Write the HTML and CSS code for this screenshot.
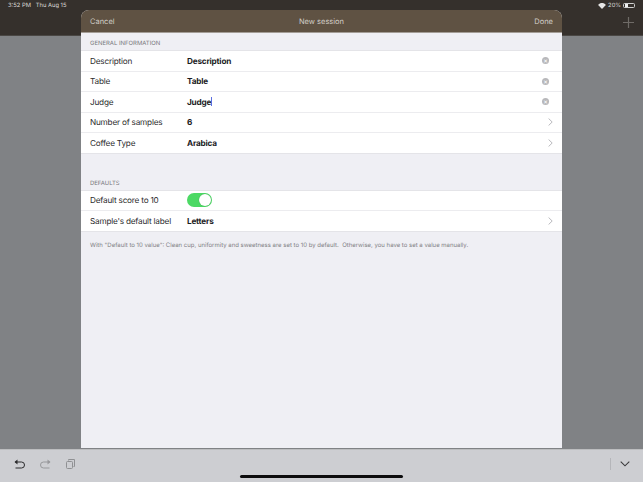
FILE: index.html
```html
<!DOCTYPE html>
<html lang="en">
<head>
<meta charset="utf-8">
<title>New session</title>
<link rel="stylesheet" href="styles.css">
</head>
<body>
<div class="app">
  <header class="topbar">
    <div class="status">
      <span>3:52 PM&nbsp;&nbsp; Thu Aug 15</span>
      <span class="status-right">
        <svg class="wifi" width="8" height="6" viewBox="0 0 9 7"><path d="M4.500 7 0 2.400C2.500-.7 6.500-.7 9 2.400Z" fill="#e6e6e6"/></svg>
        <span>20%</span>
        <span class="battery"><span class="battery-fill"></span></span>
      </span>
    </div>
    <svg class="plus" width="11" height="11" viewBox="0 0 11 11"><path d="M5.500 0v11M0 5.500h11" stroke="#6f6b67" stroke-width="1.200"/></svg>
  </header>
  <main class="backdrop"></main>
  <footer class="toolbar">
    <svg class="tool" width="11" height="10" viewBox="0 0 11 10"><path d="M1 3h6.500a3 3 0 0 1 0 6H1.500" fill="none" stroke="#2b2b2d" stroke-width="1"/><path d="M3.500 .5 .5 3l3 2.500Z" fill="#2b2b2d"/></svg>
    <svg class="tool" width="11" height="10" viewBox="0 0 11 10"><path d="M10 3H3.500a3 3 0 0 0 0 6H9.500" fill="none" stroke="#97989b" stroke-width="1"/><path d="M7.500 .5l3 2.500-3 2.500Z" fill="#97989b"/></svg>
    <svg class="tool" width="9" height="10" viewBox="0 0 9 10"><rect x="0.500" y="2.500" width="6" height="7" rx="1" fill="#cdced2" stroke="#8f9093"/><path d="M2.500 1.500V.5h6v7H7.500" fill="none" stroke="#8f9093"/></svg>
    <span class="spacer"></span>
    <span class="divider"></span>
    <svg class="chev-down" width="10" height="6" viewBox="0 0 10 6"><path d="M.7.700 5 4.800 9.300.700" fill="none" stroke="#3a3a3c" stroke-width="1.100"/></svg>
  </footer>
</div>

<section class="sheet">
  <div class="sheet-head">
    <span>Cancel</span>
    <span class="sheet-title">New session</span>
    <span>Done</span>
  </div>
  <div class="section-label first">GENERAL INFORMATION</div>
  <div class="group">
    <div class="row"><span class="label">Description</span><span class="value">Description</span><span class="clear">×</span></div>
    <div class="row"><span class="label">Table</span><span class="value">Table</span><span class="clear">×</span></div>
    <div class="row"><span class="label">Judge</span><span class="value">Judge<span class="caret"></span></span><span class="clear">×</span></div>
    <div class="row"><span class="label">Number of samples</span><span class="value">6</span><svg class="chev" width="5" height="8" viewBox="0 0 5 8"><path d="M.6.500 4.200 4 .6 7.500" fill="none" stroke="#b9b9bd" stroke-width="1"/></svg></div>
    <div class="row"><span class="label">Coffee Type</span><span class="value">Arabica</span><svg class="chev" width="5" height="8" viewBox="0 0 5 8"><path d="M.6.500 4.200 4 .6 7.500" fill="none" stroke="#b9b9bd" stroke-width="1"/></svg></div>
  </div>
  <div class="section-label second">DEFAULTS</div>
  <div class="group">
    <div class="row"><span class="label">Default score to 10</span><span class="toggle"><span class="knob"></span></span></div>
    <div class="row"><span class="label">Sample's default label</span><span class="value">Letters</span><svg class="chev" width="5" height="8" viewBox="0 0 5 8"><path d="M.6.500 4.200 4 .6 7.500" fill="none" stroke="#b9b9bd" stroke-width="1"/></svg></div>
  </div>
  <p class="note">With "Default to 10 value": Clean cup, uniformity and sweetness are set to 10 by default.&nbsp; Otherwise, you have to set a value manually.</p>
</section>
<div class="home-indicator"></div>
</body>
</html>
```
FILE: styles.css
```css
* { box-sizing: border-box; }
html, body { margin: 0; padding: 0; height: 100%; overflow: hidden; }
body { font-family: Inter, "Liberation Sans", Arial, sans-serif; background: #808285; text-rendering: geometricPrecision; }

.app { width: 643px; height: 482px; display: flex; flex-direction: column; }

.topbar { height: 36px; background: #35302c; border-bottom: 1px solid #4a4744; display: flex; flex-direction: column; padding: 0 8px; position: relative; }
.status { display: flex; justify-content: space-between; align-items: center; height: 11px; font-size: 5.800px; color: #dedddb; }
.status-right { display: flex; align-items: center; gap: 2px; padding-right: 0; }
.battery { width: 12px; height: 5.500px; border: 0.500px solid #d0d0d0; border-radius: 1.500px; display: block; padding: 0.500px; }
.battery-fill { display: block; width: 3px; height: 100%; background: #f0f0f0; }
.plus { position: absolute; right: 9px; top: 17px; }

.backdrop { flex: 1; background: #808285; }

.toolbar { height: 33px; background: #cdced2; border-top: 1px solid #bcbdbf; display: flex; align-items: center; padding: 0 13px 5px 14px; }
.tool { margin-right: 15px; }
.spacer { flex: 1; }
.divider { width: 1px; height: 12px; background: #b5b6ba; margin-right: 9px; }
.chev-down { margin-right: 0; }

.sheet { position: absolute; left: 81px; top: 10px; width: 481px; height: 438px; background: #efeff4; border-radius: 8px 8px 0 0; overflow: hidden; }
.sheet-head { height: 23px; background: #5f5243; border-bottom: 1px solid #a39d96; display: flex; justify-content: space-between; align-items: center; padding: 1px 9px 0; font-size: 7.500px; color: #d0ccc6; position: relative; }
.sheet-title { position: absolute; left: 0; right: 0; text-align: center; }

.section-label { font-size: 5.950px; color: #77777c; padding: 0 9px; }
.section-label.first { height: 17px; line-height: 21px; }
.section-label.second { height: 36px; padding-top: 23px; line-height: 14px; }

.group { background: #fff; border-top: 1px solid #e4e4e8; border-bottom: 1px solid #e4e4e8; }
.row { height: 20.500px; display: flex; align-items: center; padding: 0.400px 9px 0; font-size: 8.200px; letter-spacing: -0.200px; color: #2c2c2e; border-bottom: 1px solid #ececef; }
.row:last-child { border-bottom: 0; height: 19.500px; }
.label { width: 97px; flex: none; }
.value { flex: 1; font-weight: 700; color: #1c1c1e; display: flex; align-items: center; }
.caret { width: 1px; height: 9px; background: #5b6fe0; margin-left: 0; }
.clear { width: 7px; height: 7px; border-radius: 50%; background: #b8b8bb; color: #fff; font-size: 7px; line-height: 7px; text-align: center; margin-right: 4px; flex: none; letter-spacing: 0; }
.chev { flex: none; margin-right: 0; }

.toggle { width: 25px; height: 14px; border-radius: 7px; background: #4cd964; display: flex; justify-content: flex-end; align-items: center; padding: 1px; }
.knob { width: 12px; height: 12px; border-radius: 50%; background: #fff; box-shadow: 0 0 1px rgba(0,0,0,.3); }

.note { margin: 0; padding: 10px 9px 0; font-size: 6px; color: #7f7f84; line-height: 8px; }

.home-indicator { position: absolute; left: 240px; top: 475px; width: 163px; height: 3px; border-radius: 2px; background: #0c0c0d; }
```
